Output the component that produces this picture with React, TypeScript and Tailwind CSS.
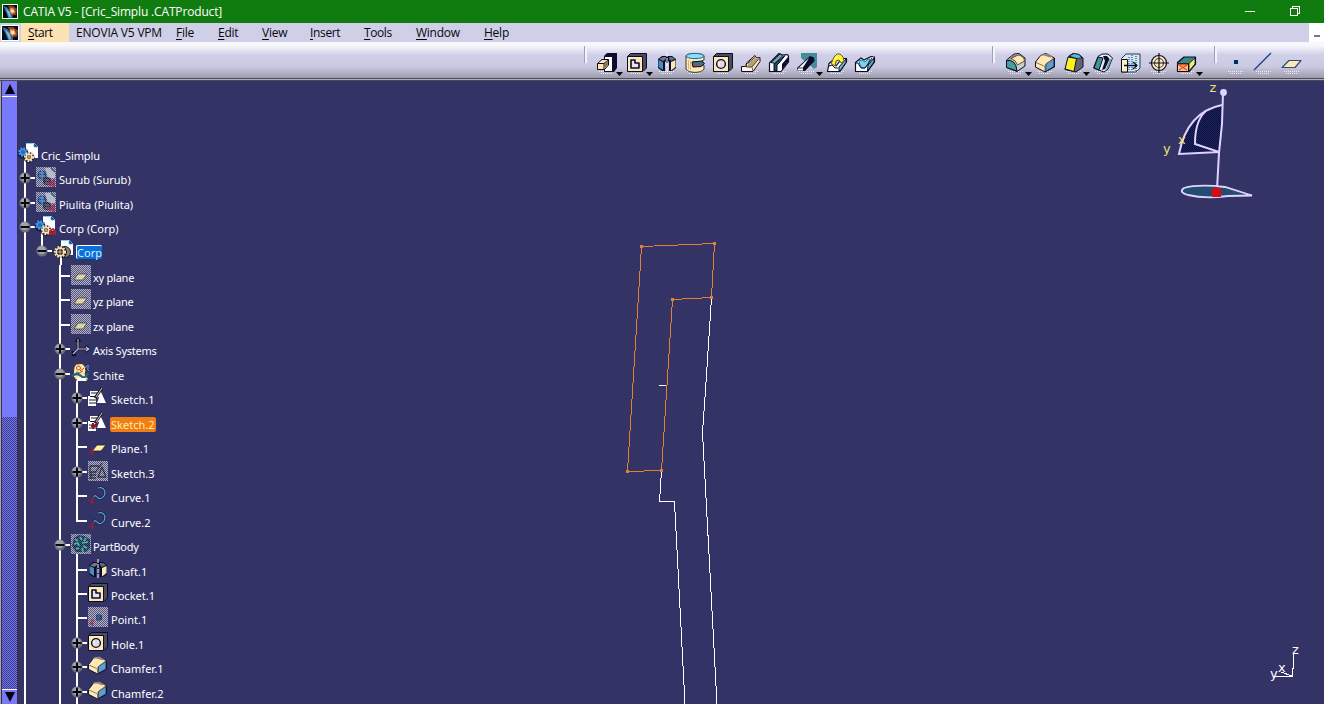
import type { ReactNode } from 'react';

const Art = ({ children, size = 20 }: { children: ReactNode; size?: number }) => (
  <svg width={size} height={size} viewBox="0 0 20 20" className="block shrink-0 overflow-visible" strokeLinejoin="round">
    {children}
  </svg>
);

const K = '#0b0b2e';
const C = '#fce9b4';

const Logo = ({ className }: { className: string }) => (
  <svg viewBox="0 0 16 16" preserveAspectRatio="none" className={className}>
    <rect width="16" height="16" fill="#080a12" />
    <path d="M0 1L5 3L11 11L11 16H6L4 10Z" fill="#2c6f9f" />
    <path d="M3 4L8 9L9 15H7Z" fill="#79b9dc" />
    <path d="M6 1L11 1L16 5L15 12L10 13L8 8Z" fill="#8b4326" />
    <path d="M8 4L12 4L14 9L10 11L8 8Z" fill="#f3a267" />
    <path d="M9 6L12 6L12 9L10 9Z" fill="#ffe9c8" />
  </svg>
);

const Shadow = () => <path d="M2 20.5H17M4 22.500H15" stroke="#efeef8" strokeWidth="1" strokeDasharray="1 1" />;

const Pad = () => (
  <Art>
    <path d="M7 3L10 0H20V15L17 19H7Z" fill={K} />
    <path d="M7.500 3.500H15.500V18.500H7.500Z" fill="#fff" stroke={K} />
    <path d="M0.500 10.500L5 6.500H11.500V12L7.500 16.500H0.500Z" fill={C} stroke={K} />
    <path d="M0.500 10.500H7V16.500M7 10.500L11.500 6.500" fill="none" stroke={K} />
    <path d="M7.500 11L11 7.500V12L7.500 15.500Z" fill="#8a784f" />
  </Art>
);
const Pocket = () => (
  <Art>
    <path d="M0.500 3.500L3.500 0.500H19.500V15L16 18.500H0.500Z" fill="#4b4b5c" stroke={K} />
    <rect x="0.500" y="3.500" width="15" height="15" fill={C} stroke={K} />
    <path d="M4 7H8V10H12V15H4Z" fill="#e4e4ed" stroke={K} strokeWidth="1.600" />
  </Art>
);
const Shaft = () => (
  <Art>
    <path d="M1 6L5 3H15L19 6V15L15 18H12V8L10 10L8 8V18H5L1 15Z" fill={K} />
    <path d="M1.500 7L6 9V17L1.500 14Z" fill="#4a8cb8" />
    <path d="M2 6L6 4H9V6L6 8Z" fill="#777789" />
    <path d="M14 9L18.500 7V14L14 17.500Z" fill={C} />
    <path d="M12 4H15L18 6L14 8L12 6Z" fill="#54707f" />
    <path d="M10 0V20" stroke="#fff" strokeDasharray="4 1" />
  </Art>
);
const Groove = () => (
  <Art>
    <path d="M1 3C1 0 19 0 19 3V7L15 9H8V13L19 12V16C17 20.500 3 20.500 1 16Z" fill={C} stroke="#413530" />
    <ellipse cx="10" cy="3" rx="9" ry="2.600" fill="#87dfff" stroke="#22658c" />
    <path d="M7 9L17 8L19.500 10.500L16 13.500L8 14Z" fill="#36788b" stroke={K} />
    <path d="M9 11.500H15" stroke="#b54432" strokeWidth="1.600" />
    <path d="M3.500 7V16M5.500 8V17" stroke="#e4ad74" />
  </Art>
);
const Hole = () => (
  <Art>
    <path d="M0.500 3.500L3.500 0.500H19.500V15L16 18.500H0.500Z" fill="#4b4b5c" stroke={K} />
    <rect x="0.500" y="3.500" width="15" height="15" fill={C} stroke={K} />
    <circle cx="8" cy="11" r="4.400" fill="#dcdbe7" stroke={K} strokeWidth="1.400" />
    <path d="M6 9V13" stroke="#fff" />
  </Art>
);
const Rib = () => (
  <Art>
    <path d="M0.500 13.500H5.500V10L14 2.500L15.500 5L19 4.500V8.500L12 18.500H0.500Z" fill={C} stroke={K} />
    <path d="M7 10L15 5L17 7L11 14H7Z" fill="#b9a078" />
    <path d="M5.500 11L14 4.500M5 11V14H11L18 5.500M11 14.500L12 18" fill="none" stroke="#4c4338" />
    <path d="M1 14H5.500V15H10.500L11.500 18H1Z" fill="#fff7e2" />
  </Art>
);
const Slot = () => (
  <Art>
    <path d="M0.500 10L10 0.500L13 2L18.500 1.500L19.500 3V9L12 18.500H0.500Z" fill="#fff" stroke={K} strokeWidth="1.200" />
    <path d="M13 11L19 4V9L13 17Z" fill={K} />
    <path d="M2 9.500L11 1L14 2.500L6 10.500Z" fill="#6ba7ad" stroke={K} />
    <path d="M5 11L16 2.500L11 9L8 12V18H5Z" fill="#244b62" stroke={K} />
  </Art>
);
const Stiffener = () => (
  <Art>
    <path d="M4 0H20V14L17 16L14 13L4 5Z" fill="#3f8e98" />
    <path d="M0 15L13 3L17 4.500L17.500 8L8 18H1Z" fill={K} />
    <path d="M1 15.500L12 5L6 14.500V17.500H1Z" fill="#fff" />
    <path d="M1 15H6L14 5" fill="none" stroke={K} strokeWidth=".8" />
  </Art>
);
const Loft = () => (
  <Art>
    <path d="M0.500 18.500L2 10.500L5 8L9 13L15 5.500H19.500V9L13 18.500Z" fill="#fff" stroke={K} strokeWidth="1.200" />
    <path d="M12 14L19 6V9.500L13 18H12Z" fill="#6ab5b4" stroke={K} />
    <path d="M4 11L7 4L10 1L13 1L16 4L17 8L14 10L12 7L9 8L8 13L5 11Z" fill="#fff42b" stroke="#66601c" />
    <path d="M7 7Q10 2 13 6" fill="none" stroke="#fffed0" />
    <path d="M2 13L5 12L8 15H11" fill="none" stroke={K} />
  </Art>
);
const RemovedLoft = () => (
  <Art>
    <path d="M0.500 18.500V9.500L6 5L9 7L16 3.500L19.500 4V9L12.500 18.500Z" fill="#fff" stroke={K} strokeWidth="1.200" />
    <path d="M13 12L19 5V9L12.500 18Z" fill="#65a8a5" stroke={K} />
    <path d="M4 8L7 7L10 9L13 6L15 6L13 11L10 15H7L5 12Z" fill="#74d6f4" stroke="#247b8e" />
    <path d="M1 10H3L6 15H10L13 11L17 5" fill="none" stroke={K} />
  </Art>
);
const Fillet = () => (
  <Art>
    <path d="M0.500 7L8 1L13 0.500L19 5V13L11 18.500L0.500 14.500Z" fill="#c6cfcb" stroke={K} />
    <path d="M1 7L8 1.500H13L7 6Z" fill="#97827f" />
    <path d="M5 5.500L12 2Q18 3 18.500 8L11.500 12Q10 7 5 5.500Z" fill={C} stroke="#6d4e3d" />
    <path d="M0.500 7.500Q10 6 11 18L0.500 14.500Z" fill="#459f9e" stroke={K} />
  </Art>
);
const Chamfer = ({ size = 20 }: { size?: number }) => (
  <Art size={size}>
    <path d="M0.500 9L6 2L11 0.500L19.500 5V14L10 19L0.500 14Z" fill={C} stroke={K} />
    <path d="M4 3.500L7 1L12 0.500L18 4L15 4.500L9 2.500Z" fill="#97827f" />
    <path d="M11 11L19 5.500V13.500L10.500 18.500Z" fill="#5a9fd0" stroke={K} strokeWidth=".8" />
    <path d="M1 9.500L10 13.500V18M10 12L19 5" fill="none" stroke="#826652" strokeWidth=".9" />
  </Art>
);
const Draft = () => (
  <Art>
    <path d="M5 3L9 0.500L15 1.500L19 5V14L12 19L1 16.500Z" fill="#65656e" stroke={K} />
    <path d="M5 3L10 0.500L15 1.500L18 5L12 5.500Z" fill="#54b8d0" stroke={K} strokeWidth=".7" />
    <path d="M4 4L12.500 5.500L10 18.500L1 16Z" fill="#f8f31e" stroke={K} />
  </Art>
);
const Shell = () => (
  <Art>
    <path d="M5 3.500L9 1H15L19.500 5L15 16L11 19L0.500 15Z" fill="#e0e9ee" stroke={K} />
    <path d="M5 4L10 5L6 17L1 15Z" fill="#3e9593" stroke={K} />
    <path d="M10 3H14L16.500 6L12 16L9 17L12 8Z" fill={K} />
    <path d="M17 6L19 6L15 15L12 18Z" fill="#62a6aa" />
  </Art>
);
const Thickness = () => (
  <Art>
    <path d="M0.500 5.500L5 1H19V15L15 19H0.500Z" fill="#d9e8ed" stroke="#293c57" />
    <path d="M0.500 6.500H6.500V19H0.500Z" fill="#fff1bd" stroke={K} />
    <path d="M8 4V18M11 2V19M15 3V18" stroke="#5594b5" strokeWidth="2" strokeDasharray="1 1" />
    <path d="M3 12.500H16M12 9L16 12.500L12 16" fill="none" stroke={K} strokeWidth="1.300" />
  </Art>
);
const Thread = () => (
  <Art>
    <circle cx="10" cy="10" r="7.500" fill={C} stroke={K} strokeWidth="1.200" />
    <circle cx="10" cy="10" r="4.500" fill="none" stroke="#4b4036" strokeWidth="1.100" />
    <path d="M0 10H20M10 0V20" stroke={K} strokeWidth="1.200" />
  </Art>
);
const ReplaceFace = () => (
  <Art>
    <path d="M0.500 9.500L7 4H18.500V11L12 18.500H0.500Z" fill="#358b7e" stroke={K} strokeWidth="1.200" />
    <path d="M0.500 10.500H11.500V18.500H0.500Z" fill="#ffc77d" stroke={K} />
    <path d="M12 10.500L18 5V11L12 18Z" fill="#f3f264" stroke={K} strokeWidth=".8" />
    <path d="M2 12L10 17M10 12L2 17M1 11.500H11" stroke="#da5026" strokeWidth="1.400" />
  </Art>
);
const PointTool = () => (
  <Art><rect x="7" y="7" width="6" height="5" fill="#9ddcf1" /><rect x="8" y="7" width="4" height="4" fill="#10275b" /></Art>
);
const LineTool = () => <Art><path d="M0 17L17 0" stroke="#183c83" strokeWidth="1.300" /></Art>;
const PlaneTool = () => <Art><path d="M0 14.500L7 7.500H19L13 14.500Z" fill={C} stroke="#2f4b79" strokeWidth="1.200" /></Art>;

const Tool = ({ children, more = false, className }: { children: ReactNode; more?: boolean; className: string }) => (
  <button className={`relative block h-[24px] w-[20px] shrink-0 ${className}`}>
    <span className="absolute left-0 top-0"><Art><Shadow /></Art></span>
    <span className="relative block">{children}</span>
    {more && <svg width="7" height="4" className="absolute -right-[6px] top-[21px]"><path d="M0 0H7L3.500 4Z" fill="#050510" /></svg>}
  </button>
);
const Grip = ({ className }: { className: string }) => (
  <span className={`h-[17px] w-[3px] shrink-0 border-l border-[#a0a0b4] bg-[#f2f2fa] ${className}`} />
);

const Gear = ({ x, y, r, color }: { x: number; y: number; r: number; color: string }) => (
  <g>
    <circle cx={x} cy={y} r={r} fill="#17213e" stroke={color} strokeWidth="2.400" strokeDasharray="1.700 1.100" />
    <circle cx={x} cy={y} r={r - 1} fill="#17213e" stroke={color} strokeWidth="1.500" />
    <path d={`M${x - r} ${y}H${x + r}M${x} ${y - r}V${y + r}`} stroke={color} strokeWidth=".8" />
  </g>
);
const Sheet = () => (
  <g>
    <path d="M7 0H15L19 4V15H7Z" fill="#fff" />
    <path d="M15 0L19 4H15Z" fill="#16263e" stroke="#5fb9e4" strokeWidth=".8" />
    <path d="M7 .5H14" stroke="#73d5e5" />
  </g>
);
const ProductIcon = ({ linked = false }: { linked?: boolean }) => (
  <Art>
    <Sheet />
    <circle cx="4" cy="10" r="5.400" fill="#14193c" />
    <circle cx="10" cy="14.500" r="5.400" fill="#14193c" />
    <Gear x={4} y={9} r={3.600} color="#3f9af0" />
    <Gear x={10} y={14} r={3.800} color="#ffe3a5" />
    {linked && <path d="M14 19L14 15L17 13L19 15V19M15 17L20 18" fill="none" stroke="#b2202d" strokeWidth="1.800" />}
  </Art>
);
const PartIcon = () => (
  <Art>
    <Sheet />
    <circle cx="11" cy="12" r="5.500" fill="#8b8370" stroke="#17182c" />
    <circle cx="7" cy="12" r="6" fill="#17182c" />
    <Gear x={6} y={12} r={4.800} color="#ffe3a5" />
  </Art>
);
const Stipple = ({ children, id }: { children: ReactNode; id: string }) => (
  <Art>
    <defs>
      <pattern id={id} width="2" height="2" patternUnits="userSpaceOnUse">
        <rect width="2" height="2" fill="#545480" /><rect width="1" height="1" fill="#c4c4cc" /><rect x="1" y="1" width="1" height="1" fill="#c4c4cc" />
      </pattern>
      <pattern id={`${id}-veil`} width="2" height="2" patternUnits="userSpaceOnUse">
        <rect width="1" height="1" fill="#9c9cb4" fillOpacity=".45" /><rect x="1" y="1" width="1" height="1" fill="#9c9cb4" fillOpacity=".45" />
      </pattern>
    </defs>
    <rect width="20" height="20" fill={`url(#${id})`} shapeRendering="crispEdges" />
    <g>{children}</g>
    <rect width="20" height="20" fill={`url(#${id}-veil)`} shapeRendering="crispEdges" />
  </Art>
);
const HiddenProduct = ({ id }: { id: string }) => (
  <Stipple id={id}>
    <path d="M9 1H16L19 4V11H12Z" fill="#e8f3ff" fillOpacity=".6" />
    <path d="M15 1L19 5" stroke="#17384e" strokeWidth="1.500" />
    <circle cx="6" cy="8" r="4.500" fill="#12345f" />
    <path d="M3 6H8M3 9H9M6 3V12" stroke="#3f91df" strokeWidth="1.400" />
    <circle cx="11" cy="14" r="4" fill="#1d1a3c" />
    <path d="M9 13H13M9 16H13" stroke="#7e7a75" />
    <path d="M14 19V16L18 13V19L14 15" fill="none" stroke="#9d1736" strokeWidth="1.800" />
  </Stipple>
);
const HiddenPlane = ({ id }: { id: string }) => (
  <Stipple id={id}><path d="M3 15L7 9H16L12 15Z" fill="#efe39c" stroke="#292a43" strokeWidth=".8" /></Stipple>
);
const AxisIcon = () => (
  <Art><path d="M7 1V11H17M7 11L2 16M5 4L7 1L9 4M15 8L18 11L15 14M2 13V17H5" fill="none" stroke="#0d0e25" strokeWidth="2.400" /><path d="M7 1V11H17M7 11L2 16M15 9L18 11L15 13" fill="none" stroke="#c9bad6" strokeWidth="1.100" /></Art>
);
const SetIcon = () => (
  <Art>
    <path d="M5 1L11 0.500L14 3L15 8L14 11L18 17H5L2 13L3 4Z" fill="#ffe7a3" stroke="#392e2a" />
    <circle cx="7.500" cy="5" r="2" fill="none" stroke="#a9573b" /><path d="M9 8L13 5M5 9Q9 11 12 8" fill="none" stroke="#a9573b" />
    <path d="M1 13Q6 9 10 13T17 10" fill="none" stroke="#176895" strokeWidth="2.200" />
    <path d="M14 5Q19 0 17 4Q16 7 18 8" fill="none" stroke="#4f9fdc" /><path d="M6 15H14L16 18H6Z" fill="#fff" />
  </Art>
);
const SketchShape = ({ active = false }: { active?: boolean }) => (
  <g>
    <path d="M2 4H13V9L8 11V19H0V9H2Z" fill="#fff" />
    <path d="M13 5L18 16H9Z" fill="#fff" />
    <path d="M3 6H10M2 9.500H8M1 13H8M1 16H8" fill="none" stroke="#1a1a2d" strokeWidth="1.100" />
    <path d="M7 11L14 1" stroke="#16172a" strokeWidth="3" /><path d="M8 10L14 1" stroke="#d4dcb4" />
    {active && <path d="M5 17V11M3 14H9M6 15L9 11" stroke="#8c1523" strokeWidth="2" />}
  </g>
);
const SketchIcon = ({ active = false }: { active?: boolean }) => <Art><SketchShape active={active} /></Art>;
const HiddenSketch = () => (
  <Stipple id="stipple-sketch"><path d="M2 5H11M2 5V10M1 11H8M1 14H8M1 17H8M3 11V18M7 12L14 2M14 6L18 16H10Z" fill="none" stroke="#15152c" strokeWidth="1.300" /></Stipple>
);
const Pin = () => <path d="M4 19V14M1 16.500H6M3 14L6 13" stroke="#941f35" strokeWidth="1.400" fill="none" />;
const TreePlane = () => <Art><path d="M4 15L9 9H18L13 15Z" fill="#fff0a4" stroke="#1c1c2c" strokeWidth=".8" /><Pin /></Art>;
const CurveIcon = () => (
  <Art><path d="M6 12Q7 9 10 13Q13 15 16 11Q19 5 13 2.500L10 3" fill="none" stroke="#15203d" strokeWidth="2.600" /><path d="M6 12Q7 9 10 13Q13 15 16 11Q19 5 13 2.500L10 3" fill="none" stroke="#5eace3" strokeWidth="1.200" /><Pin /></Art>
);
const BodyIcon = () => (
  <Stipple id="stipple-body">
    <path d="M3 4L8 1L13 2L19 5V14L15 18L5 18L1 12Z" fill="#0e2a44" />
    <path d="M4 5L7 7M9 3L11 6M15 4L13 7M3 10L7 9L8 12M11 9L17 8M5 15L8 14M12 12L16 14M11 14L12 18" fill="none" stroke="#35bdb4" strokeWidth="1.700" />
  </Stipple>
);
const PointIcon = () => (
  <Stipple id="stipple-point"><rect x="8" y="8" width="6" height="5" fill="#1a2853" /><rect x="9" y="7" width="3" height="7" fill="#1d4578" /><Pin /></Stipple>
);

type Node = {
  label: string;
  depth: number;
  guides: number[];
  icon: ReactNode;
  tall: boolean;
  toggle?: 'plus' | 'minus';
  last?: boolean;
  stem?: boolean;
  tight?: boolean;
  mark?: 'blue' | 'orange';
};

const nodes: Node[] = [
  { label: 'Surub (Surub)', depth: 1, guides: [], tall: true, icon: <HiddenProduct id="stipple-surub" />, toggle: 'plus' },
  { label: 'Piulita (Piulita)', depth: 1, guides: [], tall: false, icon: <HiddenProduct id="stipple-piulita" />, toggle: 'plus' },
  { label: 'Corp (Corp)', depth: 1, guides: [], tall: false, icon: <ProductIcon linked />, toggle: 'minus', stem: true },
  { label: 'Corp', depth: 2, guides: [0], tall: true, icon: <PartIcon />, toggle: 'minus', last: true, stem: true, mark: 'blue' },
  { label: 'xy plane', depth: 3, guides: [0], tall: false, icon: <HiddenPlane id="stipple-xy" />, tight: true },
  { label: 'yz plane', depth: 3, guides: [0], tall: true, icon: <HiddenPlane id="stipple-yz" />, tight: true },
  { label: 'zx plane', depth: 3, guides: [0], tall: false, icon: <HiddenPlane id="stipple-zx" />, tight: true },
  { label: 'Axis Systems', depth: 3, guides: [0], tall: true, icon: <AxisIcon />, toggle: 'plus', tight: true },
  { label: 'Schite', depth: 3, guides: [0], tall: false, icon: <SetIcon />, toggle: 'minus', stem: true },
  { label: 'Sketch.1', depth: 4, guides: [0, 2], tall: true, icon: <SketchIcon />, toggle: 'plus' },
  { label: 'Sketch.2', depth: 4, guides: [0, 2], tall: false, icon: <SketchIcon active />, toggle: 'plus', mark: 'orange' },
  { label: 'Plane.1', depth: 4, guides: [0, 2], tall: true, icon: <TreePlane /> },
  { label: 'Sketch.3', depth: 4, guides: [0, 2], tall: false, icon: <HiddenSketch />, toggle: 'plus' },
  { label: 'Curve.1', depth: 4, guides: [0, 2], tall: true, icon: <CurveIcon /> },
  { label: 'Curve.2', depth: 4, guides: [0, 2], tall: false, icon: <CurveIcon />, last: true },
  { label: 'PartBody', depth: 3, guides: [0], tall: true, icon: <BodyIcon />, toggle: 'minus', stem: true, tight: true },
  { label: 'Shaft.1', depth: 4, guides: [0, 2], tall: false, icon: <Shaft /> },
  { label: 'Pocket.1', depth: 4, guides: [0, 2], tall: false, icon: <Pocket /> },
  { label: 'Point.1', depth: 4, guides: [0, 2], tall: true, icon: <PointIcon /> },
  { label: 'Hole.1', depth: 4, guides: [0, 2], tall: false, icon: <Hole />, toggle: 'plus' },
  { label: 'Chamfer.1', depth: 4, guides: [0, 2], tall: true, icon: <Chamfer size={19} />, toggle: 'plus' },
  { label: 'Chamfer.2', depth: 4, guides: [0, 2], tall: true, icon: <Chamfer size={19} />, toggle: 'plus' },
];

const Ball = ({ kind }: { kind: 'plus' | 'minus' }) => (
  <svg width="12" height="12" viewBox="0 0 12 12" className="absolute left-px top-[5px]">
    <circle cx="6" cy="6" r="5.600" fill="#6d6d7c" />
    <circle cx="5.500" cy="5" r="4.300" fill="#a0a0a8" />
    <path d={kind === 'plus' ? 'M1.500 6H10.500M6 1.500V10.500' : 'M1.500 6H10.500'} stroke="#08080f" strokeWidth="2" />
  </svg>
);

const columnWidths = ['w-[17px]', 'w-[18px]', 'w-[17px]', 'w-[17px]'];

const TreeRow = ({ node }: { node: Node }) => (
  <div className={`flex shrink-0 ${node.tall ? 'h-[25px]' : 'h-[24px]'}`}>
    {Array.from({ length: node.depth - 1 }, (_, i) => (
      <span key={i} className={`flex shrink-0 pl-[6px] ${columnWidths[i]}`}>
        {node.guides.includes(i) && <span className="h-full w-[2px] bg-white" />}
      </span>
    ))}
    <span className={`relative flex shrink-0 pl-[6px] ${columnWidths[node.depth - 1]}`}>
      <span className={`w-[2px] shrink-0 bg-white ${node.last ? 'h-[12px]' : 'h-full'}`} />
      <span className="mt-[10px] h-[2px] w-[9px] shrink-0 bg-white" />
      {node.toggle && <Ball kind={node.toggle} />}
    </span>
    <span className={`relative ml-px shrink-0 ${node.depth === 1 || node.depth === 4 ? 'w-[23px]' : 'w-[22px]'}`}>
      {node.stem && <span className={`absolute bottom-0 h-[7px] w-[2px] bg-white ${node.depth === 1 ? 'left-[5px]' : node.depth === 2 ? 'left-[6px]' : 'left-[5px]'}`} />}
      <span className="relative block">{node.icon}</span>
    </span>
    <span
      className={`mt-[5px] whitespace-pre rounded-[2px] text-[11px] ${node.tight ? 'tracking-[-0.24px]' : 'tracking-[0.03px]'} ${
        node.mark === 'blue' ? 'h-[14px] border-l border-t border-white bg-[#0870d8] leading-[13px] text-[#d9efff]' : node.mark === 'orange' ? '-ml-px h-[15px] bg-[#f27d16] px-px leading-[15px] text-[#fff0a4]' : 'h-[16px] leading-[15px] text-white'
      }`}
    >
      {node.label}
    </span>
  </div>
);

const ScrollBar = () => (
  <div className="flex w-[18px] shrink-0 flex-col border-l border-[#a5a5b0] bg-[#33334f] pl-px pr-px">
    <div className="flex h-[16px] items-center justify-center border-b border-white bg-[#7979f5]">
      <svg width="10" height="10"><path d="M5 0L10 10H0Z" fill="#030310" /></svg>
    </div>
    <div className="h-[320px] bg-[#7979fb]" />
    <svg className="min-h-0 w-full flex-1" shapeRendering="crispEdges">
      <defs><pattern id="track" width="2" height="2" patternUnits="userSpaceOnUse"><rect width="2" height="2" fill="#3e3e90" /><rect width="1" height="1" fill="#7373e8" /><rect x="1" y="1" width="1" height="1" fill="#7373e8" /></pattern></defs>
      <rect width="100%" height="100%" fill="url(#track)" />
    </svg>
    <div className="flex h-[15px] items-center justify-center border-t border-white bg-[#7979f5]">
      <svg width="10" height="10"><path d="M0 0H10L5 10Z" fill="#030310" /></svg>
    </div>
  </div>
);

const MenuLabel = ({ text, className, accel = true }: { text: string; className: string; accel?: boolean }) => (
  <span className={`shrink-0 whitespace-pre ${className}`}>
    {accel ? <><span className="underline underline-offset-2">{text[0]}</span>{text.slice(1)}</> : text}
  </span>
);

const Profile = () => (
  <svg width="120" height="470" viewBox="610 234 120 470" className="absolute left-[610px] top-[153px]" fill="none" shapeRendering="crispEdges">
    <path d="M711.500 298L705.500 390L702.500 432L717 704M661.500 470L659.500 502L674.500 501.500L685 704M659 385.500H666" stroke="#fff" />
    <path d="M641.500 246.500L714.500 243.500L711.500 297.500L672.500 299.500L661.500 470.500L627.500 471.500Z" stroke="#e08038" />
    <path d="M640 245h3v3h-3zM713 242h3v3h-3zM710 296h3v3h-3zM671 298h3v3h-3zM660 469h3v3h-3zM626 470h3v3h-3z" fill="#e08038" />
  </svg>
);

const Compass = () => (
  <svg width="110" height="125" viewBox="1150 81 110 125" className="absolute left-[1150px] top-0">
    <defs><pattern id="sail" width="2" height="2" patternUnits="userSpaceOnUse"><rect width="2" height="2" fill="#23235b" /><rect width="1" height="1" fill="#07103e" /><rect x="1" y="1" width="1" height="1" fill="#07103e" /></pattern></defs>
    <path d="M1222 105Q1186 111 1179 154L1219.500 152Z" fill="url(#sail)" />
    <path d="M1222 105Q1187 112 1179 154L1219 152L1195 144Q1195 117 1209 109" fill="none" stroke="#dfd3ff" strokeWidth="2" />
    <path d="M1223 93L1222 124L1219 153L1217 189" fill="none" stroke="#dfd3ff" strokeWidth="2" />
    <circle cx="1223.500" cy="92.500" r="3.400" fill="#dfd3ff" />
    <path d="M1252 195.500L1225 187Q1198 184 1184 188Q1178 192 1188 195Q1205 199 1228 196Z" fill="#244b70" stroke="#dfd3ff" strokeWidth="1.800" />
    <path d="M1212 188H1221V197H1212Z" fill="#d80b13" />
    <g fill="#eee36b" fontFamily="DejaVu Sans, sans-serif" fontSize="13"><text x="1209.500" y="92">z</text><text x="1178" y="144">x</text><text x="1163" y="153">y</text></g>
  </svg>
);

const Axes = () => (
  <svg width="50" height="55" viewBox="1260 635 50 55" className="absolute left-[1260px] top-[554px]">
    <path d="M1294 653L1292.500 676.500H1274M1292 676L1281 672" fill="none" stroke="#fff" shapeRendering="crispEdges" />
    <g fill="#fff" fontFamily="DejaVu Sans, sans-serif" fontSize="13"><text x="1292" y="654">z</text><text x="1278" y="672">x</text><text x="1270" y="678">y</text></g>
  </svg>
);

export default function App() {
  return (
    <div className="flex h-[704px] w-[1324px] flex-col overflow-hidden bg-[#333366] font-['Noto_Sans',sans-serif]">
      <header className="flex h-[23px] shrink-0 items-center bg-[#107c10] pl-[2px] text-white">
        <Logo className="h-[15px] w-[16px] border border-white" />
        <h1 className="ml-[5px] flex-1 whitespace-pre font-['Open_Sans',sans-serif] text-[12px] leading-[22px] tracking-[-0.16px]">CATIA V5 - [Cric_Simplu .CATProduct]</h1>
        <svg width="10" height="10" className="mb-[2px] mr-[35px]" shapeRendering="crispEdges"><path d="M0 5.500H10" stroke="#fff" /></svg>
        <svg width="10" height="10" className="mb-[2px] mr-[24px]" fill="none" stroke="#fff" shapeRendering="crispEdges"><path d="M.5 2.500H7.500V9.500H.5ZM2.500 2.500V.5H9.500V7.500H7.500" /></svg>
      </header>

      <nav className="flex h-[19px] shrink-0 items-stretch bg-[#cfcfe7] pl-px font-['Open_Sans',sans-serif] text-[12px] leading-[20px] tracking-[-0.25px] text-[#08080c]">
        <Logo className="mt-[2px] h-[16px] w-[18px] border border-white" />
        <MenuLabel text="Start" className="ml-[2px] w-[48px] bg-[#fde3b4] pl-[7px] tracking-[-0.4px]" />
        <MenuLabel text="ENOVIA V5 VPM" accel={false} className="w-[107px] pl-[7px] tracking-[-0.2px]" />
        <MenuLabel text="File" className="w-[42px]" />
        <MenuLabel text="Edit" className="w-[44px]" />
        <MenuLabel text="View" className="w-[48px]" />
        <MenuLabel text="Insert" className="w-[54px] tracking-[-0.35px]" />
        <MenuLabel text="Tools" className="w-[52px] tracking-[-0.4px]" />
        <MenuLabel text="Window" className="w-[68px]" />
        <MenuLabel text="Help" className="flex-1" />
        <span className="flex w-[15px] items-center bg-white pl-[5px]"><span className="mt-[6px] h-[2px] w-[6px] bg-[#777780]" /></span>
      </nav>

      <div className="flex h-[36px] shrink-0 bg-[linear-gradient(to_bottom,#f7f7fc_0%,#f7f7fc_10%,#d0cfe8_36%,#cbcae2_68%,#9c9cac_100%)]">
        <Grip className="ml-[584px] mt-[4px]" />
        <div className="ml-[10px] flex pt-[9px]">
          <Tool more className=""><Pad /></Tool>
          <Tool more className="ml-[10px]"><Pocket /></Tool>
          <Tool className="ml-[10px]"><Shaft /></Tool>
          <Tool className="ml-[8px]"><Groove /></Tool>
          <Tool className="ml-[8px]"><Hole /></Tool>
          <Tool className="ml-[8px]"><Rib /></Tool>
          <Tool className="ml-[8px]"><Slot /></Tool>
          <Tool more className="ml-[8px]"><Stiffener /></Tool>
          <Tool className="ml-[10px]"><Loft /></Tool>
          <Tool className="ml-[8px]"><RemovedLoft /></Tool>
        </div>
        <Grip className="ml-[117px] mt-[4px]" />
        <div className="ml-[11px] flex pt-[9px]">
          <Tool more className=""><Fillet /></Tool>
          <Tool className="ml-[9px]"><Chamfer /></Tool>
          <Tool more className="ml-[9px]"><Draft /></Tool>
          <Tool className="ml-[9px]"><Shell /></Tool>
          <Tool className="ml-[8px]"><Thickness /></Tool>
          <Tool className="ml-[8px]"><Thread /></Tool>
          <Tool more className="ml-[8px]"><ReplaceFace /></Tool>
        </div>
        <Grip className="ml-[17px] mt-[4px]" />
        <div className="ml-[9px] flex gap-[8px] pt-[9px]">
          <Tool className=""><PointTool /></Tool>
          <Tool className=""><LineTool /></Tool>
          <Tool className=""><PlaneTool /></Tool>
        </div>
      </div>
      <div className="h-[3px] shrink-0 border-b border-t border-[#4b4b58] bg-[#aeaec0]" />

      <main className="relative flex min-h-0 flex-1">
        <ScrollBar />
        <div className="flex w-[200px] shrink-0 flex-col overflow-hidden pt-[62px]">
          <div className="flex h-[24px] shrink-0">
            <span className="relative w-[23px] shrink-0 pl-[1px]">
              <span className="absolute left-[6px] top-[14px] h-[10px] w-[2px] bg-white" />
              <span className="relative block"><ProductIcon /></span>
            </span>
            <span className="mt-[5px] text-[11px] leading-[16px] tracking-[-0.1px] text-white">Cric_Simplu</span>
          </div>
          {nodes.map((node) => <TreeRow key={node.label} node={node} />)}
        </div>
        <Profile />
        <Compass />
        <Axes />
      </main>
    </div>
  );
}
